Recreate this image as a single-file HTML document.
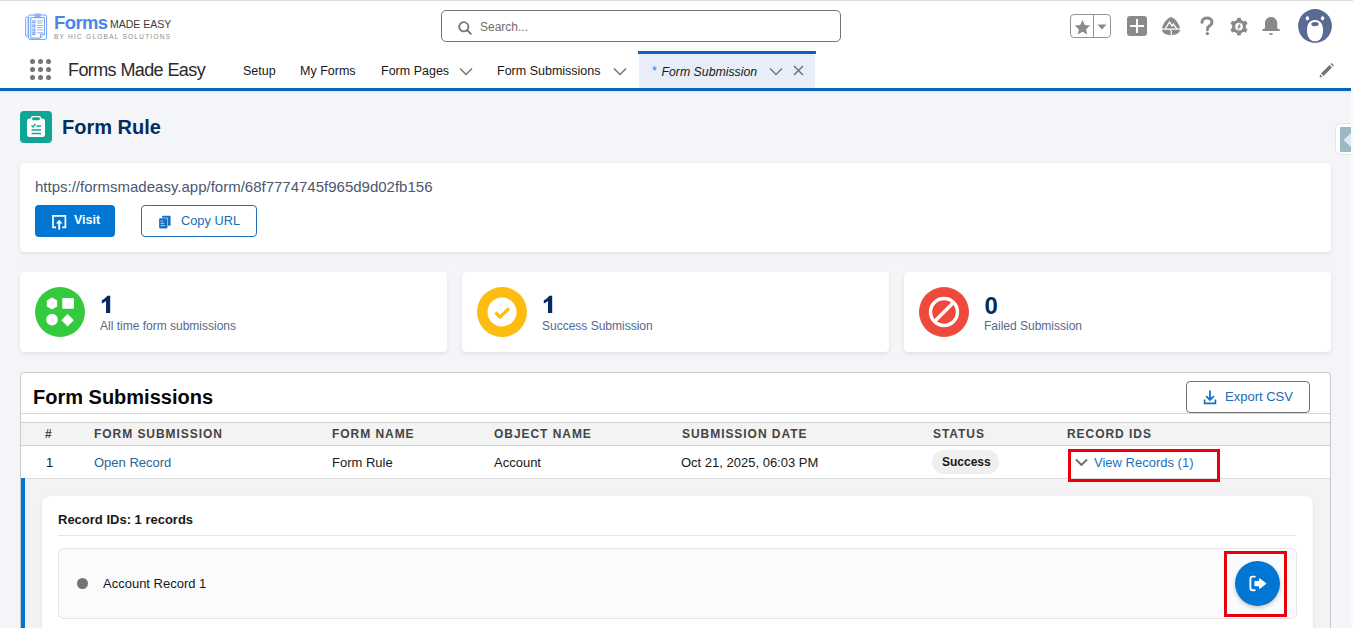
<!DOCTYPE html>
<html><head><meta charset="utf-8">
<style>
*{box-sizing:border-box;margin:0;padding:0}
html,body{width:1353px;height:628px;overflow:hidden}
body{font-family:"Liberation Sans",sans-serif;background:#f3f5f8;position:relative;color:#181818}
.a{position:absolute}
.t{position:absolute;white-space:nowrap;line-height:1}
#hdr{left:0;top:0;width:1353px;height:88px;background:#fff}
#topline{left:0;top:0;width:1353px;height:1px;background:#dcdcdc}
#navline{left:0;top:88px;width:1351px;height:3px;background:#0865b8}
#navglow{left:0;top:91px;width:1351px;height:2px;background:linear-gradient(#dbe8f8,#eef2f8)}
.search{left:441px;top:10px;width:400px;height:32px;border:1px solid #747474;border-radius:5px;background:#fff}
.navt{font-size:12.5px;color:#181818;margin-top:1px}
.chev{position:absolute}
.card{position:absolute;background:#fff;border-radius:4px;box-shadow:0 2px 4px rgba(0,0,0,0.08),0 0 1px rgba(0,0,0,0.06)}
.statnum{font-size:22px;font-weight:bold;color:#032d60}
.statlbl{font-size:12px;color:#54698d}
.th{font-size:12px;font-weight:bold;color:#444;letter-spacing:0.95px}
.td{font-size:13px;color:#181818}
.lnk{color:#2467a8}
</style></head>
<body>
<div class="a" id="hdr"></div>
<div class="a" id="topline"></div>

<!-- logo -->
<svg class="a" style="left:24px;top:12px" width="24" height="29" viewBox="0 0 24 29">
  <g fill="none" stroke="#6f9ff2" stroke-width="1">
    <rect x="4.6" y="3" width="18" height="24.4" rx="1.5"/>
    <path d="M6.8 5.6h13.6v16.5l-4 4H6.8z"/>
    <path d="M16.4 26.1v-4h4"/>
    <rect x="1.7" y="5" width="2.5" height="19.5" rx="1.2"/>
    <rect x="8.8" y="8.8" width="2.2" height="2"/>
    <rect x="8.8" y="12.9" width="2.2" height="2"/>
    <rect x="8.8" y="17" width="2.2" height="2"/>
    <rect x="8.8" y="20.6" width="2.2" height="2"/>
  </g>
  <rect x="10.5" y="1.5" width="6.4" height="3.4" rx="1" fill="#8db3f5"/>
  <g stroke="#8db3f5" stroke-width="1">
    <path d="M13 9h6M13 11h5M13 13.5h6M13 15.5h5M13 17.8h6M13 20.8h6"/>
  </g>
</svg>
<div class="t" style="left:54px;top:14px;font-size:18.5px;font-weight:bold;color:#4a86e8;letter-spacing:-0.6px">Forms</div>
<div class="t" style="left:110px;top:19px;font-size:10.5px;color:#3a3a3a">MADE EASY</div>
<div class="t" style="left:54px;top:34px;font-size:6.5px;color:#8a8a8a;letter-spacing:1.25px">BY HIC GLOBAL SOLUTIONS</div>

<!-- search -->
<div class="a search"></div>
<svg class="a" style="left:458px;top:21px" width="14" height="14" viewBox="0 0 14 14"><circle cx="5.8" cy="5.8" r="4.6" fill="none" stroke="#747474" stroke-width="1.8"/><path d="M9.2 9.2l3.6 3.6" stroke="#747474" stroke-width="1.9" stroke-linecap="round"/></svg>
<div class="t" style="left:480px;top:21px;font-size:12px;color:#706e6b">Search...</div>

<!-- right icons -->
<div class="a" style="left:1070px;top:14px;width:41px;height:24px;border:1px solid #939393;border-radius:4px;background:#fff"></div>
<div class="a" style="left:1093px;top:15px;width:1px;height:22px;background:#939393"></div>
<svg class="a" style="left:1073.5px;top:18.5px" width="17" height="17" viewBox="0 0 24 24"><path d="M12 1.5l3.2 7 7.6.8-5.7 5.1 1.6 7.5L12 18l-6.7 3.9 1.6-7.5L1.2 9.3l7.6-.8z" fill="#8a8a8a"/></svg>
<svg class="a" style="left:1097px;top:24px" width="10" height="6" viewBox="0 0 10 6"><path d="M0.5 0.5h9L5 5.5z" fill="#8a8a8a"/></svg>
<div class="a" style="left:1127px;top:16px;width:20px;height:20px;border-radius:3px;background:#8a8a8a"></div>
<div class="a" style="left:1130.3px;top:24.8px;width:13.5px;height:2.5px;background:#fff"></div>
<div class="a" style="left:1135.8px;top:19.3px;width:2.5px;height:13.5px;background:#fff"></div>
<svg class="a" style="left:1161px;top:16px" width="20" height="20" viewBox="0 0 20 20"><path d="M0.9 12.6 C1.6 7.5 7 1.2 10 0.9 C13 1.2 18.4 7.5 19.1 12.6z" fill="#8a8a8a"/><path d="M0.9 13.8 H19.1 C18.8 17.4 14.6 19.2 10 19.2 C5.4 19.2 1.2 17.4 0.9 13.8z" fill="#8a8a8a"/><path d="M4.2 12.8 L8.5 5.9 11 10 12.2 8 15.9 12.8" fill="none" stroke="#fff" stroke-width="1.3" stroke-linejoin="miter"/><path d="M9.3 13.6 L10.5 16 10 17.5 10.8 19.5" fill="none" stroke="#fff" stroke-width="1.1"/></svg>
<svg class="a" style="left:1199px;top:16px" width="16" height="20" viewBox="0 0 16 20"><path d="M3 6.2 C3 3.5 5.2 2 8 2 C10.8 2 13 3.6 13 6.2 C13 9 10 9.8 9 11.2 C8.5 12 8.4 12.6 8.4 13.8" fill="none" stroke="#8a8a8a" stroke-width="3" stroke-linecap="round"/><circle cx="8.4" cy="17.6" r="1.7" fill="#8a8a8a"/></svg>
<svg class="a" style="left:1230px;top:17px" width="18" height="19" viewBox="0 0 18 19"><g fill="#8a8a8a"><circle cx="9" cy="9.6" r="7"/><rect x="7" y="0.6999999999999993" width="4" height="4.2" rx="1" transform="rotate(0 9 9.6)"/><rect x="7" y="0.6999999999999993" width="4" height="4.2" rx="1" transform="rotate(60 9 9.6)"/><rect x="7" y="0.6999999999999993" width="4" height="4.2" rx="1" transform="rotate(120 9 9.6)"/><rect x="7" y="0.6999999999999993" width="4" height="4.2" rx="1" transform="rotate(180 9 9.6)"/><rect x="7" y="0.6999999999999993" width="4" height="4.2" rx="1" transform="rotate(240 9 9.6)"/><rect x="7" y="0.6999999999999993" width="4" height="4.2" rx="1" transform="rotate(300 9 9.6)"/></g><circle cx="9" cy="9.6" r="3.9" fill="#fff"/><path d="M10.3 6.5 L7.6 10.1 H9.1 L7.9 12.9 10.7 9.1 H9.2z" fill="#8a8a8a" stroke="#8a8a8a" stroke-width="0.5"/></svg>
<svg class="a" style="left:1262px;top:16px" width="19" height="20" viewBox="0 0 19 20"><g fill="#8a8a8a"><path d="M9.1 0.9 C5.5 0.9 3 3.5 3 7 V11.2 C3 12.3 2.2 13.1 0.8 13.4 H17.4 C16 13.1 15.2 12.3 15.2 11.2 V7 C15.2 3.5 12.7 0.9 9.1 0.9z"/><rect x="0.2" y="13.1" width="17.8" height="2" rx="1"/><path d="M6.8 17.2 H11.1 C10.8 18.4 10 19 9 19 C8 19 7.1 18.4 6.8 17.2z"/></g></svg>
<svg class="a" style="left:1298px;top:9px" width="34" height="34" viewBox="0 0 34 34"><circle cx="17" cy="17" r="16.9" fill="#596a93"/><ellipse cx="9.4" cy="9.3" rx="1.7" ry="2.1" fill="#fff"/><ellipse cx="24.6" cy="9.3" rx="1.7" ry="2.1" fill="#fff"/><path d="M17 11 C11.6 11 9 15.2 9 21.2 C9 28 12 32.3 17 32.3 C22 32.3 25 28 25 21.2 C25 15.2 22.4 11 17 11z" fill="#fff"/><ellipse cx="17" cy="15.1" rx="3.7" ry="2.2" fill="#596a93"/></svg>

<!-- nav -->
<svg class="a" style="left:29px;top:58px" width="22" height="22" viewBox="0 0 22 22" fill="#747474"><circle cx="3.5" cy="3.5" r="2.5"/><circle cx="11.5" cy="3.5" r="2.5"/><circle cx="19.5" cy="3.5" r="2.5"/><circle cx="3.5" cy="11.5" r="2.5"/><circle cx="11.5" cy="11.5" r="2.5"/><circle cx="19.5" cy="11.5" r="2.5"/><circle cx="3.5" cy="19.5" r="2.5"/><circle cx="11.5" cy="19.5" r="2.5"/><circle cx="19.5" cy="19.5" r="2.5"/></svg>
<div class="t" style="left:68px;top:61px;font-size:18px;letter-spacing:-0.6px;color:#2a2a2a">Forms Made Easy</div>
<div class="t navt" style="left:243px;top:64px">Setup</div>
<div class="t navt" style="left:300px;top:64px">My Forms</div>
<div class="t navt" style="left:381px;top:64px">Form Pages</div>
<svg class="a" style="left:459px;top:67px" width="14" height="9" viewBox="0 0 14 9"><path d="M1 1.5l6 6 6-6" fill="none" stroke="#747474" stroke-width="1.5"/></svg>
<div class="t navt" style="left:497px;top:64px">Form Submissions</div>
<svg class="a" style="left:613px;top:67px" width="14" height="9" viewBox="0 0 14 9"><path d="M1 1.5l6 6 6-6" fill="none" stroke="#747474" stroke-width="1.5"/></svg>
<div class="a" style="left:638px;top:51px;width:178px;height:3px;background:#0a66b8"></div>
<div class="a" style="left:639px;top:54px;width:176px;height:34px;background:#e7eef7"></div>
<div class="t" style="left:652px;top:65px;font-size:12.5px;color:#1b7fd8">*</div>
<div class="t" style="left:661.5px;top:66px;font-size:12.3px;font-style:italic;color:#181818">Form Submission</div>
<svg class="a" style="left:769px;top:67px" width="14" height="9" viewBox="0 0 14 9"><path d="M1 1.5l6 6 6-6" fill="none" stroke="#747474" stroke-width="1.5"/></svg>
<svg class="a" style="left:793px;top:65px" width="11" height="11" viewBox="0 0 11 11"><path d="M1 1l9 9M10 1l-9 9" stroke="#747474" stroke-width="1.5"/></svg>
<svg class="a" style="left:1319px;top:63px" width="15" height="15" viewBox="0 0 15 15"><path d="M2 10.5 L10.5 2 13 4.5 4.5 13z" fill="#747474"/><path d="M1.2 11.5 L3.5 13.8 0.6 14.4z" fill="#747474"/><path d="M11.5 1 L12.5 0 15 2.5 14 3.5z" fill="#747474"/></svg>
<div class="a" id="navline"></div>
<div class="a" id="navglow"></div>

<!-- right handle -->
<div class="a" style="left:1335px;top:123px;width:20px;height:32px;background:#fff;border:1px solid #e2e4e8;border-radius:6px 0 0 6px"></div>
<div class="a" style="left:1340px;top:127px;width:11px;height:25px;background:#9cb8c4"></div>
<svg class="a" style="left:1343px;top:133px" width="8" height="14" viewBox="0 0 8 14"><path d="M8 0 L0.5 7 8 14z" fill="#dde9ee"/></svg>
<div class="a" style="left:1351px;top:91px;width:2px;height:537px;background:#f9fafb"></div>

<!-- page header -->
<div class="a" style="left:20px;top:111px;width:32px;height:32px;border-radius:4px;background:#10a495"></div>
<svg class="a" style="left:26px;top:116px" width="20" height="22" viewBox="0 0 20 22"><rect x="1" y="2.5" width="18" height="18.5" rx="2.5" fill="#fff"/><rect x="5.5" y="0.5" width="9" height="4.5" rx="2" fill="#10a495" stroke="#fff" stroke-width="1.3"/><path d="M5.5 9.5l1.5 1.5 2.5-3M10.5 10h4.5M5.5 14h9.5M5.5 17.5h9.5" fill="none" stroke="#10a495" stroke-width="1.3"/></svg>
<div class="t" style="left:62px;top:117px;font-size:20px;font-weight:bold;color:#032d60">Form Rule</div>

<!-- url card -->
<div class="card" style="left:20px;top:163px;width:1311px;height:89px"></div>
<div class="t" style="left:35px;top:179px;font-size:15px;color:#4a5771">https://formsmadeasy.app/form/68f7774745f965d9d02fb156</div>
<div class="a" style="left:35px;top:205px;width:80px;height:32px;border-radius:4px;background:#0176d3"></div>
<svg class="a" style="left:51px;top:214px" width="16" height="16" viewBox="0 0 16 16"><path d="M5 13.4H2V1.9H14.4V13.4H11.2" fill="none" stroke="#fff" stroke-width="1.7"/><path d="M8.2 15.6V8.5" stroke="#fff" stroke-width="1.9"/><path d="M4.9 9.6L8.2 5.8 11.5 9.6z" fill="#fff"/></svg>
<div class="t" style="left:74px;top:214px;font-size:12.5px;font-weight:bold;color:#fff">Visit</div>
<div class="a" style="left:141px;top:205px;width:116px;height:32px;border-radius:4px;background:#fff;border:1px solid #2370b8"></div>
<svg class="a" style="left:158px;top:214px" width="14" height="16" viewBox="0 0 14 16"><rect x="4.2" y="1.8" width="8.4" height="9.9" rx="0.8" fill="#1a70bf"/><rect x="0.6" y="3.7" width="9.4" height="11.2" rx="1" fill="#fff"/><rect x="1.1" y="4.2" width="8.4" height="10.2" rx="0.8" fill="#1a70bf"/><path d="M2.6 7h2.5M2.6 9.3h3.5M2.6 11.6h4.5" stroke="#fff" stroke-width="0.8" opacity="0.85"/></svg>
<div class="t" style="left:181px;top:214.5px;font-size:12.8px;color:#1a6cb9">Copy URL</div>

<!-- stat cards -->
<div class="card" style="left:20px;top:272px;width:427px;height:80px"></div>
<div class="card" style="left:462px;top:272px;width:427px;height:80px"></div>
<div class="card" style="left:904px;top:272px;width:427px;height:80px"></div>

<svg class="a" style="left:35px;top:287px" width="50" height="50" viewBox="0 0 50 50"><circle cx="25" cy="25" r="25" fill="#35c93d"/><path d="M17 10.5l5.2 3v6l-5.2 3-5.2-3v-6z" fill="#fff"/><rect x="27.3" y="11" width="11.6" height="10.8" rx="0.8" fill="#fff"/><circle cx="17" cy="32.6" r="5.8" fill="#fff"/><path d="M32.6 27l6.2 6.2-6.2 6.2-6.2-6.2z" fill="#fff"/></svg>
<svg class="a" style="left:100px;top:295px" width="12" height="18" viewBox="0 0 12 18"><path d="M7.3 0.7H10.2V17.9H6V6.1C4.7 7.2 3.3 8 1.8 8.6V5.2C3.9 4.2 6.1 2.5 7.3 0.7z" fill="#032d60"/></svg>
<div class="t statlbl" style="left:100px;top:320px">All time form submissions</div>

<svg class="a" style="left:477px;top:287px" width="50" height="50" viewBox="0 0 50 50"><circle cx="25" cy="25" r="25" fill="#fdbd10"/><circle cx="25" cy="25" r="14.5" fill="#fff"/><path d="M18.5 25.5l4.5 4.5 9-8.5" fill="none" stroke="#fdbd10" stroke-width="3.2"/></svg>
<svg class="a" style="left:542px;top:295px" width="12" height="18" viewBox="0 0 12 18"><path d="M7.3 0.7H10.2V17.9H6V6.1C4.7 7.2 3.3 8 1.8 8.6V5.2C3.9 4.2 6.1 2.5 7.3 0.7z" fill="#032d60"/></svg>
<div class="t statlbl" style="left:542px;top:320px">Success Submission</div>

<svg class="a" style="left:919px;top:287px" width="50" height="50" viewBox="0 0 50 50"><circle cx="25" cy="25" r="25" fill="#ee4a3c"/><circle cx="25" cy="25" r="13.5" fill="none" stroke="#fff" stroke-width="3.4"/><path d="M16 34L34 16" stroke="#fff" stroke-width="3.4"/></svg>
<div class="t statnum" style="left:984.5px;top:294px;font-size:24px">0</div>
<div class="t statlbl" style="left:984px;top:320px">Failed Submission</div>

<!-- submissions panel -->
<div class="a" style="left:20px;top:372px;width:1311px;height:300px;background:#fff;border:1px solid #c9c9c9;border-radius:4px"></div>
<div class="t" style="left:33px;top:387px;font-size:20px;font-weight:bold;color:#080707">Form Submissions</div>
<div class="a" style="left:1186px;top:381px;width:124px;height:32px;border:1px solid #747474;border-radius:4px;background:#fff"></div>
<svg class="a" style="left:1202px;top:390px" width="16" height="15" viewBox="0 0 16 15"><path d="M8 1.2v8.6M4.6 6.6L8 10l3.4-3.4" fill="none" stroke="#1a70c0" stroke-width="1.8" stroke-linecap="round"/><path d="M2.6 9.4v4h10.8v-4" fill="none" stroke="#1a70c0" stroke-width="1.7"/></svg>
<div class="t" style="left:1225px;top:389.5px;font-size:13px;color:#176bb9">Export CSV</div>
<div class="a" style="left:21px;top:413px;width:1309px;height:1px;background:#d8d8d8"></div>
<div class="a" style="left:21px;top:422px;width:1309px;height:24px;background:#f3f3f3;border-top:1px solid #d0d0d0;border-bottom:1px solid #d0d0d0"></div>
<div class="t th" style="left:45px;top:428px">#</div>
<div class="t th" style="left:94px;top:428px">FORM SUBMISSION</div>
<div class="t th" style="left:332px;top:428px">FORM NAME</div>
<div class="t th" style="left:494px;top:428px">OBJECT NAME</div>
<div class="t th" style="left:682px;top:428px">SUBMISSION DATE</div>
<div class="t th" style="left:933px;top:428px">STATUS</div>
<div class="t th" style="left:1067px;top:428px">RECORD IDS</div>

<div class="t td" style="left:46px;top:456px">1</div>
<div class="t td" style="left:94px;top:455.5px;color:#2a6399">Open Record</div>
<div class="t td" style="left:332px;top:456px">Form Rule</div>
<div class="t td" style="left:494px;top:456px">Account</div>
<div class="t td" style="left:681px;top:456px">Oct 21, 2025, 06:03 PM</div>
<div class="a" style="left:932px;top:450px;width:67px;height:24px;border-radius:12px;background:#efefef"></div>
<div class="t" style="left:942px;top:456px;font-size:12px;font-weight:bold;color:#181818">Success</div>
<svg class="a" style="left:1075px;top:458px" width="13" height="9" viewBox="0 0 13 9"><path d="M1 1.5l5.5 5.5 5.5-5.5" fill="none" stroke="#6b6b6b" stroke-width="1.9"/></svg>
<div class="t td" style="left:1094px;top:456px;color:#1b6fc2">View Records (1)</div>

<!-- expanded -->
<div class="a" style="left:21px;top:478px;width:1309px;height:150px;background:#f3f3f3;border-top:1px solid #dddddd"></div>
<div class="a" style="left:21px;top:478px;width:4px;height:150px;background:#0176d3"></div>
<div class="a" style="left:42px;top:496px;width:1271px;height:140px;background:#fff;border-radius:8px;box-shadow:0 1px 3px rgba(0,0,0,0.1)"></div>
<div class="t" style="left:58px;top:513px;font-size:13px;font-weight:bold;color:#181818">Record IDs: 1 records</div>
<div class="a" style="left:58px;top:535px;width:1238px;height:1px;background:#e5e5e5"></div>
<div class="a" style="left:58px;top:548px;width:1239px;height:71px;background:#fafbfc;border:1px solid #e5e5e5;border-radius:6px"></div>
<div class="a" style="left:77px;top:578px;width:11px;height:11px;border-radius:50%;background:#747474"></div>
<div class="t" style="left:103px;top:577px;font-size:13px;color:#181818">Account Record 1</div>
<div class="a" style="left:1235px;top:561px;width:45px;height:45px;border-radius:50%;background:#0176d3;box-shadow:0 2px 4px rgba(0,0,0,0.2)"></div>
<svg class="a" style="left:1248px;top:575px" width="20" height="17" viewBox="0 0 20 17"><path d="M6.8 1.6H4.6Q2.4 1.6 2.4 3.8V13Q2.4 15.2 4.6 15.2H6.8" fill="none" stroke="#fff" stroke-width="1.9" stroke-linecap="round"/><path d="M7 6.6H11.6V4L17.6 8.6 11.6 13.2V10.6H7z" fill="#fff" stroke="#fff" stroke-width="1.2" stroke-linejoin="round"/></svg>
<div class="a" style="left:1224px;top:551px;width:63px;height:66px;border:3px solid #e8000d"></div>
<div class="a" style="left:1068px;top:449px;width:152px;height:33px;border:3px solid #e8000d"></div>
</body></html>
